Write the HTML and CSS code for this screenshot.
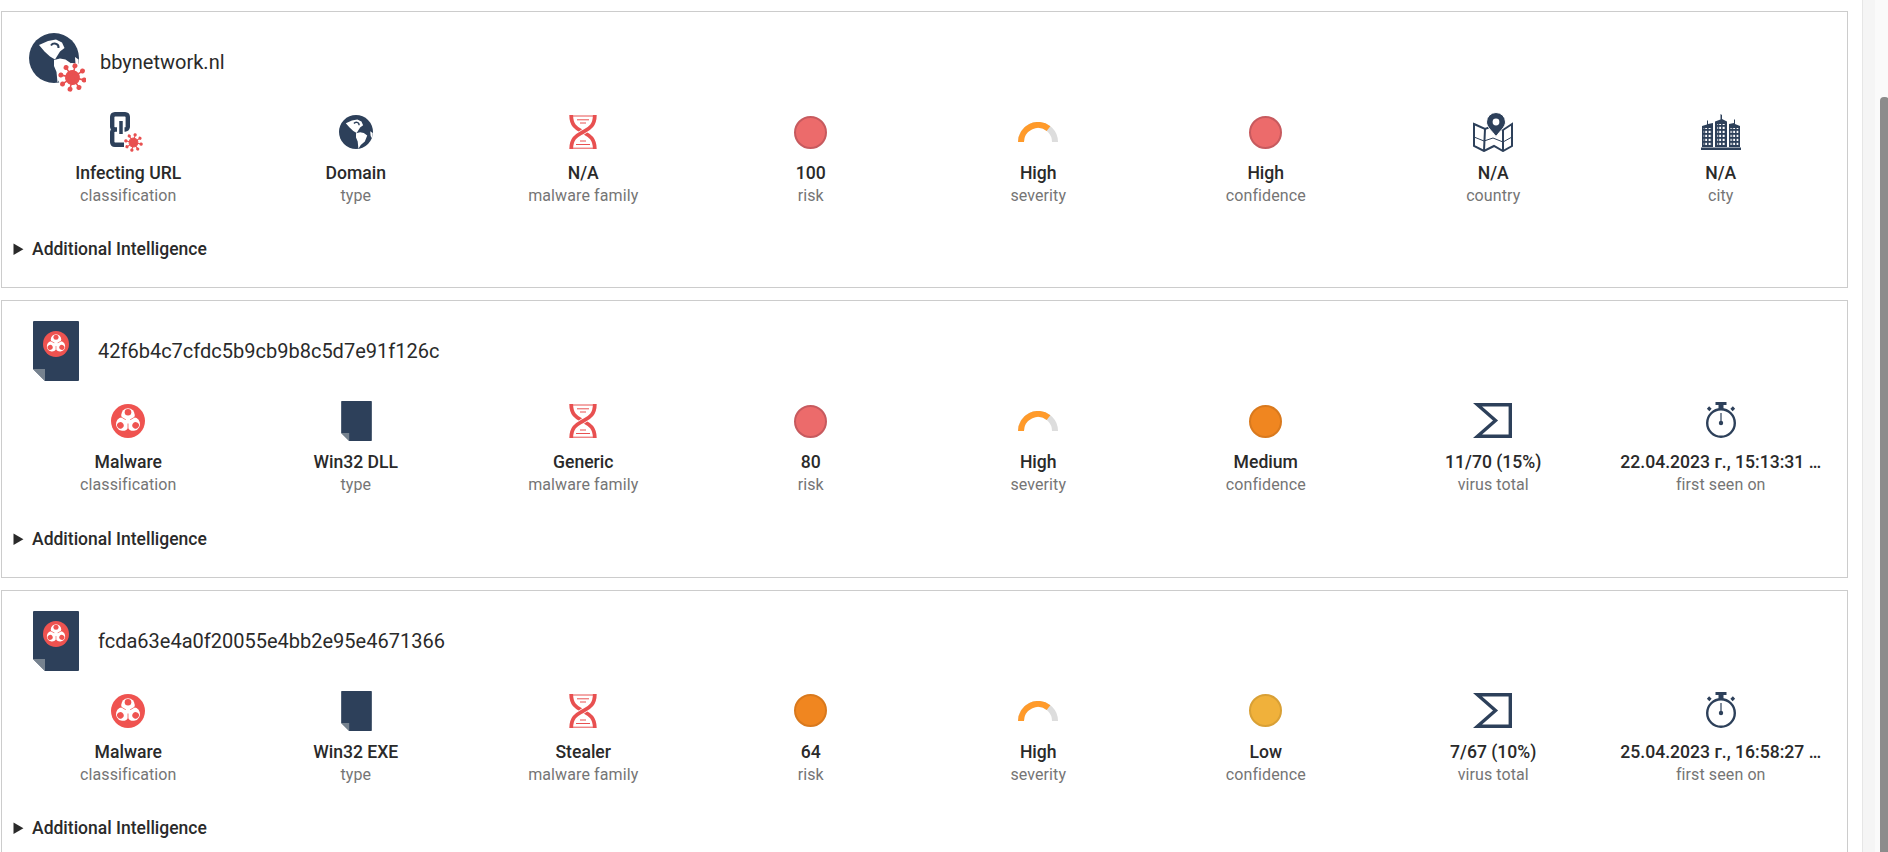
FILE: index.html
```html
<!DOCTYPE html>
<html lang="en">
  <head>
    <meta charset="UTF-8" />
    <meta name="viewport" content="width=device-width, initial-scale=1.0" />
    <title>Threat Intelligence</title>
    <link rel="stylesheet" href="styles.css">
  </head>
  <body>
    <svg class="sprite" aria-hidden="true">
      <defs>
        <symbol id="virus" viewBox="-14 -14 28 28">
          <g fill="#e85050" stroke="#e85050" stroke-width="1.5" transform="rotate(12)">
            <circle r="6.5" />
            <path d="M0 0V-11M0 0L7.8-7.8M0 0H11M0 0L7.8 7.8M0 0V11M0 0L-7.8 7.8M0 0H-11M0 0L-7.8-7.8" />
            <g stroke="none">
              <circle cy="-11.5" r="2.4" /><circle cx="8.1" cy="-8.1" r="2.4" /><circle cx="11.5" r="2.4" />
              <circle cx="8.1" cy="8.1" r="2.4" /><circle cy="11.5" r="2.4" /><circle cx="-8.1" cy="8.1" r="2.4" />
              <circle cx="-11.5" r="2.4" /><circle cx="-8.1" cy="-8.1" r="2.4" />
            </g>
          </g>
        </symbol>
        <symbol id="globe" viewBox="0 0 100 100">
          <circle cx="50" cy="50" r="50" fill="#2d405a" />
          <path fill="#fff" d="M20 24L38 16L54 13L66 19L71 30L62 37L57 45L52 53L42 47L31 37Z" />
          <path fill="#fff" d="M50 54L62 51L73 53L83 60L76 78L64 88L57 99L55 78L50 66Z" />
          <path fill="#fff" d="M92 48L99 53L98 70L93 62Z" />
          <path fill="none" stroke="#2d405a" stroke-width="4" d="M44 25C48 19 60 20 59 30" />
        </symbol>
        <symbol id="dna" viewBox="0 0 28 34">
          <g fill="none">
            <path stroke="#e85050" stroke-width="1" d="M4 1H24M8 4.800H20M11 8H17M11 26H17M7 29.500H21M4 33.200H24" />
            <path stroke="#e85050" stroke-width="3.800" d="M2.200 0C2.200 12 9 14 14 17S25.800 22 25.800 34" />
            <path stroke="#fff" stroke-width="5.600" d="M18 14.200L10 19.800" />
            <path stroke="#e85050" stroke-width="3.800" d="M25.800 0C25.800 12 19 14 14 17S2.200 22 2.200 34" />
          </g>
        </symbol>
        <symbol id="gauge" viewBox="0 0 40 20">
          <path fill="none" stroke="#ddd" stroke-width="6" d="M3 20A17 17 0 0 1 37 20" />
          <path fill="none" stroke="#ff9a2a" stroke-width="6" d="M3 20A17 17 0 0 1 30.500 6.600" />
        </symbol>
        <symbol id="biohazard" viewBox="-17 -17 34 34">
          <circle r="17" fill="#ef5350" />
          <g fill="#fff">
            <circle cy="-6" r="6.800" />
            <circle cy="-6" r="6.800" transform="rotate(120)" />
            <circle cy="-6" r="6.800" transform="rotate(240)" />
          </g>
          <g fill="#ef5350">
            <circle cy="-8.800" r="3.300" />
            <circle cy="-8.800" r="3.300" transform="rotate(120)" />
            <circle cy="-8.800" r="3.300" transform="rotate(240)" />
            <path d="M-0.400 2.500H0.400V13H-0.400Z" />
            <path d="M-0.400 2.500H0.400V13H-0.400Z" transform="rotate(120)" />
            <path d="M-0.400 2.500H0.400V13H-0.400Z" transform="rotate(240)" />
          </g>
        </symbol>
        <symbol id="file" viewBox="0 0 46 60">
          <path fill="#2d405a" d="M1 0H45A1 1 0 0 1 46 1V59A1 1 0 0 1 45 60H12L0 48V1A1 1 0 0 1 1 0Z" />
          <path fill="#76828f" d="M0 48H12V60Z" />
        </symbol>
        <symbol id="link" viewBox="0 0 20 35">
          <g fill="none" stroke="#2d405a" stroke-width="4.400">
            <path d="M7 17.500H5A3 3 0 0 1 2.200 15V5A3 3 0 0 1 5 2.200H15A3 3 0 0 1 17.800 5V15A3 3 0 0 1 15 17.500H14.500" />
            <path d="M5 17.500A3 3 0 0 0 2.200 21V30A3 3 0 0 0 5 32.800H14" />
          </g>
          <path fill="none" stroke="#2d405a" stroke-width="3.500" d="M11 9V22" />
        </symbol>
        <symbol id="map" viewBox="0 0 40 40">
          <g fill="none" stroke="#2d405a" stroke-width="2">
            <path d="M1 12L12 17L20 14L30 18L39 12V34L30 39L21 34L11 39L1 34Z" />
            <path d="M12 17L11 39M30 18V39" />
            <path stroke-width="1" d="M1 25L11 29L20 26L30 30L39 25" />
          </g>
          <path fill="#2d405a" stroke="#fff" stroke-width="1" d="M23 0.500A9.500 9.500 0 0 1 32.500 10C32.500 15 27 19 23 24.500C19 19 13.500 15 13.500 10A9.500 9.500 0 0 1 23 0.500Z" />
          <circle cx="23" cy="10" r="3.400" fill="#fff" />
        </symbol>
        <pattern id="windows" width="3.500" height="4" patternUnits="userSpaceOnUse">
          <rect width="2" height="2.200" x="0.600" y="0.800" fill="#fff" />
        </pattern>
        <symbol id="city" viewBox="0 0 40 36">
          <g fill="#2d405a">
            <path d="M1 33V12L6 10.500V6.500L7 6.500V10L12 9V33Z" />
            <path d="M14 33V7.500L19.500 5.500V0L21 1V5L26 7.500V33Z" />
            <path d="M28 33V10L33 9V5L34 6V10L39 12V33Z" />
            <rect y="33.500" width="40" height="2.500" />
          </g>
          <rect x="2.500" y="14" width="8" height="17" fill="url(#windows)" />
          <rect x="16" y="10" width="8" height="21" fill="url(#windows)" />
          <rect x="29.500" y="14" width="8" height="17" fill="url(#windows)" />
        </symbol>
        <symbol id="sigma" viewBox="0 0 39 35">
          <path fill="none" stroke="#2d405a" stroke-width="3.400" d="M4.500 1.700H37.300V33.300H4.500L22.500 17.500Z" />
        </symbol>
        <symbol id="watch" viewBox="0 0 32 36">
          <circle cx="16" cy="21" r="13.800" fill="none" stroke="#2d405a" stroke-width="2.400" />
          <path fill="#2d405a" d="M10.500 0H21.500V3H18.500V7H13.500V3H10.500Z" />
          <path fill="none" stroke="#2d405a" stroke-width="3.200" d="M3 5.500L5.500 8M29 5.500L26.500 8" />
          <path fill="none" stroke="#2d405a" stroke-width="1.200" d="M16 11V20" />
          <circle cx="16" cy="21" r="2.200" fill="#2d405a" />
        </symbol>
      </defs>
    </svg>

    <main class="feed">
      <section class="card">
        <header class="card-head">
          <svg class="head-icon" viewBox="0 0 60 60">
            <use href="#globe" x="3" y="1" width="50" height="50" />
            <circle cx="46" cy="45" r="14" fill="#fff" />
            <use href="#virus" x="32" y="31" width="29" height="29" />
          </svg>
          <h2 class="card-title">bbynetwork.nl</h2>
        </header>
        <div class="stats">
          <div class="stat">
            <svg class="stat-icon" viewBox="0 0 40 40">
              <use href="#link" x="2" y="0" width="20" height="35" />
              <circle cx="26" cy="31" r="9" fill="#fff" />
              <use href="#virus" x="16" y="21" width="19" height="19" />
            </svg>
            <div class="stat-value">Infecting URL</div>
            <div class="stat-label">classification</div>
          </div>
          <div class="stat">
            <svg class="stat-icon" viewBox="0 0 40 40"><use href="#globe" x="3" y="3" width="34" height="34" /></svg>
            <div class="stat-value">Domain</div>
            <div class="stat-label">type</div>
          </div>
          <div class="stat">
            <svg class="stat-icon" viewBox="0 0 40 40"><use href="#dna" x="6" y="3" width="28" height="34" /></svg>
            <div class="stat-value">N/A</div>
            <div class="stat-label">malware family</div>
          </div>
          <div class="stat">
            <div class="stat-icon"><span class="dot dot-high"></span></div>
            <div class="stat-value">100</div>
            <div class="stat-label">risk</div>
          </div>
          <div class="stat">
            <svg class="stat-icon" viewBox="0 0 40 40"><use href="#gauge" x="0" y="10" width="40" height="20" /></svg>
            <div class="stat-value">High</div>
            <div class="stat-label">severity</div>
          </div>
          <div class="stat">
            <div class="stat-icon"><span class="dot dot-high"></span></div>
            <div class="stat-value">High</div>
            <div class="stat-label">confidence</div>
          </div>
          <div class="stat">
            <svg class="stat-icon" viewBox="0 0 40 40"><use href="#map" width="40" height="40" /></svg>
            <div class="stat-value">N/A</div>
            <div class="stat-label">country</div>
          </div>
          <div class="stat">
            <svg class="stat-icon" viewBox="0 0 40 40"><use href="#city" y="2" width="40" height="36" /></svg>
            <div class="stat-value">N/A</div>
            <div class="stat-label">city</div>
          </div>
        </div>
        <details class="more"><summary>Additional Intelligence</summary></details>
      </section>

      <section class="card">
        <header class="card-head">
          <svg class="head-icon head-icon-file" viewBox="0 0 58 60">
            <use href="#file" x="7" width="46" height="60" />
            <use href="#biohazard" x="17" y="10" width="26" height="26" />
          </svg>
          <h2 class="card-title">42f6b4c7cfdc5b9cb9b8c5d7e91f126c</h2>
        </header>
        <div class="stats">
          <div class="stat">
            <svg class="stat-icon" viewBox="0 0 40 40"><use href="#biohazard" x="3" y="3" width="34" height="34" /></svg>
            <div class="stat-value">Malware</div>
            <div class="stat-label">classification</div>
          </div>
          <div class="stat">
            <svg class="stat-icon" viewBox="0 0 40 40"><use href="#file" x="5" y="0" width="31" height="40" /></svg>
            <div class="stat-value">Win32 DLL</div>
            <div class="stat-label">type</div>
          </div>
          <div class="stat">
            <svg class="stat-icon" viewBox="0 0 40 40"><use href="#dna" x="6" y="3" width="28" height="34" /></svg>
            <div class="stat-value">Generic</div>
            <div class="stat-label">malware family</div>
          </div>
          <div class="stat">
            <div class="stat-icon"><span class="dot dot-high"></span></div>
            <div class="stat-value">80</div>
            <div class="stat-label">risk</div>
          </div>
          <div class="stat">
            <svg class="stat-icon" viewBox="0 0 40 40"><use href="#gauge" x="0" y="10" width="40" height="20" /></svg>
            <div class="stat-value">High</div>
            <div class="stat-label">severity</div>
          </div>
          <div class="stat">
            <div class="stat-icon"><span class="dot dot-medium"></span></div>
            <div class="stat-value">Medium</div>
            <div class="stat-label">confidence</div>
          </div>
          <div class="stat">
            <svg class="stat-icon" viewBox="0 0 40 40"><use href="#sigma" x="0" y="2" width="39" height="35" /></svg>
            <div class="stat-value">11/70 (15%)</div>
            <div class="stat-label">virus total</div>
          </div>
          <div class="stat">
            <svg class="stat-icon" viewBox="0 0 40 40"><use href="#watch" x="4" y="1" width="32" height="36" /></svg>
            <div class="stat-value">22.04.2023 г., 15:13:31 …</div>
            <div class="stat-label">first seen on</div>
          </div>
        </div>
        <details class="more"><summary>Additional Intelligence</summary></details>
      </section>

      <section class="card">
        <header class="card-head">
          <svg class="head-icon head-icon-file" viewBox="0 0 58 60">
            <use href="#file" x="7" width="46" height="60" />
            <use href="#biohazard" x="17" y="10" width="26" height="26" />
          </svg>
          <h2 class="card-title">fcda63e4a0f20055e4bb2e95e4671366</h2>
        </header>
        <div class="stats">
          <div class="stat">
            <svg class="stat-icon" viewBox="0 0 40 40"><use href="#biohazard" x="3" y="3" width="34" height="34" /></svg>
            <div class="stat-value">Malware</div>
            <div class="stat-label">classification</div>
          </div>
          <div class="stat">
            <svg class="stat-icon" viewBox="0 0 40 40"><use href="#file" x="5" y="0" width="31" height="40" /></svg>
            <div class="stat-value">Win32 EXE</div>
            <div class="stat-label">type</div>
          </div>
          <div class="stat">
            <svg class="stat-icon" viewBox="0 0 40 40"><use href="#dna" x="6" y="3" width="28" height="34" /></svg>
            <div class="stat-value">Stealer</div>
            <div class="stat-label">malware family</div>
          </div>
          <div class="stat">
            <div class="stat-icon"><span class="dot dot-medium"></span></div>
            <div class="stat-value">64</div>
            <div class="stat-label">risk</div>
          </div>
          <div class="stat">
            <svg class="stat-icon" viewBox="0 0 40 40"><use href="#gauge" x="0" y="10" width="40" height="20" /></svg>
            <div class="stat-value">High</div>
            <div class="stat-label">severity</div>
          </div>
          <div class="stat">
            <div class="stat-icon"><span class="dot dot-low"></span></div>
            <div class="stat-value">Low</div>
            <div class="stat-label">confidence</div>
          </div>
          <div class="stat">
            <svg class="stat-icon" viewBox="0 0 40 40"><use href="#sigma" x="0" y="2" width="39" height="35" /></svg>
            <div class="stat-value">7/67 (10%)</div>
            <div class="stat-label">virus total</div>
          </div>
          <div class="stat">
            <svg class="stat-icon" viewBox="0 0 40 40"><use href="#watch" x="4" y="1" width="32" height="36" /></svg>
            <div class="stat-value">25.04.2023 г., 16:58:27 …</div>
            <div class="stat-label">first seen on</div>
          </div>
        </div>
        <details class="more"><summary>Additional Intelligence</summary></details>
      </section>
    </main>

    <div class="rail"><div class="rail-thumb"></div></div>
  </body>
</html>
```

FILE: styles.css
```css
html,
body {
  height: 100%;
}
body {
  display: flex;
  margin: 0;
  overflow: hidden;
  background-color: white;
  color: #2a2a2a;
  font-family: Roboto, "Liberation Sans", sans-serif;
}
.sprite {
  position: absolute;
  width: 0;
  height: 0;
}
.feed {
  flex: 1;
  min-width: 0;
  padding: 11px 14px 0 1px;
  overflow: hidden;
}
.card {
  margin-bottom: 12px;
  padding: 20px 0 26px;
  border: 1px solid #ccc;
}
.card-head {
  display: flex;
  align-items: center;
  height: 60px;
  padding-left: 24px;
}
.head-icon {
  flex: none;
  width: 60px;
  height: 60px;
  margin-right: 14px;
}
.head-icon-file {
  width: 58px;
  margin-right: 14px;
}
.card-title {
  margin: 0;
  font-size: 20px;
  font-weight: 400;
}
.stats {
  display: grid;
  grid-template-columns: repeat(8, 1fr);
  margin-top: 20px;
  padding: 0 12.5px;
}
.stat {
  min-width: 0;
  padding: 0 12px;
  text-align: center;
}
.stat-icon {
  display: flex;
  align-items: center;
  justify-content: center;
  width: 40px;
  height: 40px;
  margin: 0 auto 10px;
}
.dot {
  box-sizing: border-box;
  width: 33px;
  height: 33px;
  border: 2px solid;
  border-radius: 50%;
}
.dot-high {
  background-color: #ec6b6b;
  border-color: #c75a5e;
}
.dot-medium {
  background-color: #f08620;
  border-color: #d9791d;
}
.dot-low {
  background-color: #f0b13b;
  border-color: #d9a035;
}
.stat-value {
  font-size: 17.6px;
  font-weight: 500;
  line-height: 23px;
  white-space: nowrap;
}
.stat-label {
  color: #757575;
  font-size: 16px;
  letter-spacing: 0.1px;
  line-height: 22px;
}
.more {
  margin-top: 30.4px;
  padding-left: 11.5px;
  font-size: 17.5px;
  font-weight: 500;
  line-height: 24px;
}
.rail {
  flex: none;
  box-sizing: border-box;
  width: 26px;
  border-left: 1px solid #e6e6e6;
  background: linear-gradient(to right, #f5f5f5 12px, #fafafa 12px);
}
.rail-thumb {
  width: 9px;
  height: 755px;
  margin: 97px 0 0 17px;
  border-radius: 4px 4px 0 0;
  background-color: #8c8c8c;
}
```
